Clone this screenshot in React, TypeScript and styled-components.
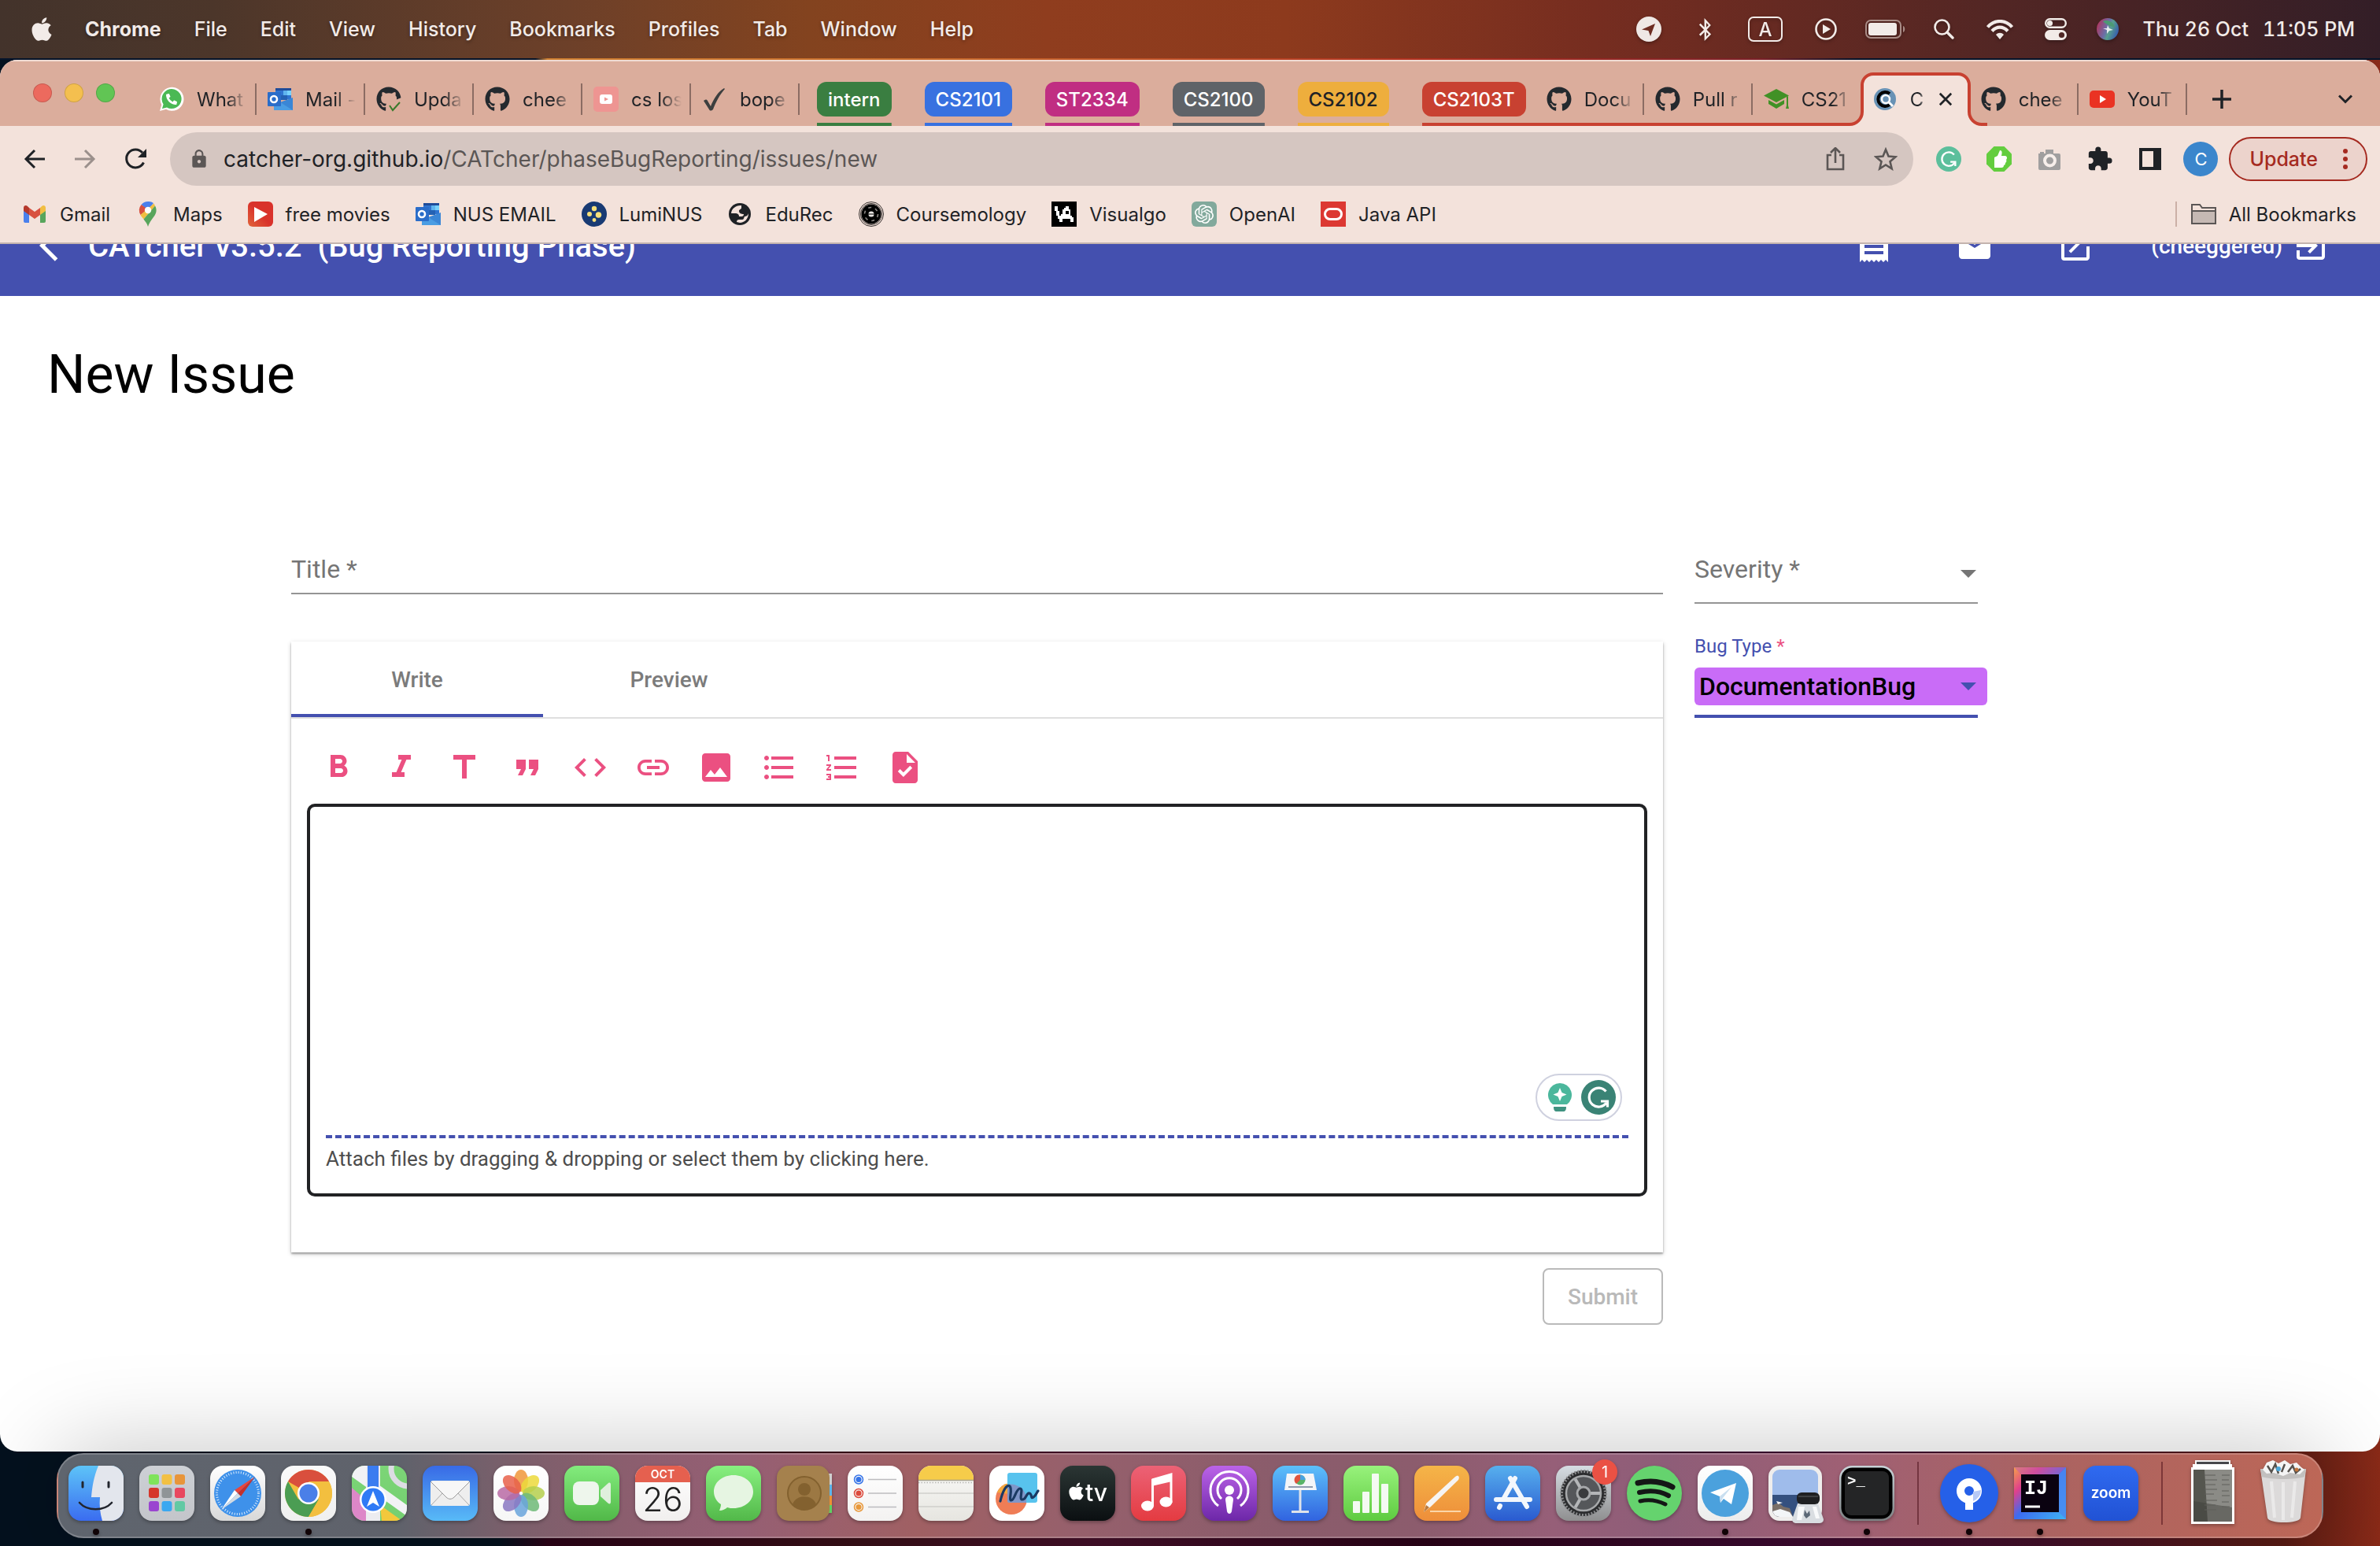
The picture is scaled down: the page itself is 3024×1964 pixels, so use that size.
import React from "react";
import styled, { createGlobalStyle, css } from "styled-components";
import { FaApple, FaGithub, FaPhoneAlt, FaThumbsUp, FaBluetoothB } from "react-icons/fa";
import {
  MdArrowBackIos,
  MdCode,
  MdExitToApp,
  MdExtension,
  MdFormatBold,
  MdFormatItalic,
  MdFormatListBulleted,
  MdFormatListNumbered,
  MdFormatQuote,
  MdImage,
  MdInsertLink,
  MdLock,
  MdMail,
  MdOpenInNew,
  MdReceipt,
  MdTask,
  MdTitle,
} from "react-icons/md";
import { SiOpenai } from "react-icons/si";

const SYSTEM = `Inter, "Liberation Sans", sans-serif`;
const ROBOTO = `Roboto, "Liberation Sans", sans-serif`;
const INDIGO = "#4450af";
const PINK = "#eb5081";
const FRAME = "#dbad9c";
const CREAM = "#f3e2db";
const INK = "#1f2226";
const GROUP_RED = "#c84131";

const GlobalStyle = createGlobalStyle`
  * { box-sizing: border-box; }
  body { margin: 0; background: #1c0716; }
  button { border: 0; padding: 0; background: none; font: inherit; color: inherit; cursor: pointer; }
  a { color: inherit; text-decoration: none; }
  svg { display: block; flex: none; }
`;

const Desktop = styled.div`
  height: 100vh;
  display: flex;
  flex-direction: column;
  overflow: hidden;
  font-family: ${SYSTEM};
  background: linear-gradient(
    90deg,
    #04111e 0%,
    #04111e 21%,
    #2d0418 23%,
    #3a1018 36%,
    #45102a 46%,
    #2b0318 60%,
    #3c0a30 74%,
    #44102a 86%,
    #5a1c14 96%,
    #8a2a18 100%
  );
`;

/* ---------- Menu bar ---------- */

const MenuBar = styled.header`
  flex: none;
  height: 76px;
  padding: 0 32px 2px 40px;
  display: flex;
  justify-content: space-between;
  align-items: center;
  color: #f2ebe8;
  font-size: 25px;
  background:
    linear-gradient(90deg, #05142a 22.5%, #d08030 23%, #c86a2c 40%, #b03020 60%, #7a2028 74%, #05142a 78%) bottom / 100% 2px no-repeat,
    linear-gradient(90deg, #43332b 0%, #4c362a 9%, #6d4029 24%, #83431f 34%, #8f3d1e 44%, #8d3a1d 54%, #762d20 67%, #522624 84%, #331e27 100%);
`;

const MenuGroup = styled.nav`
  display: flex;
  align-items: center;
  gap: 42px;
`;

const MenuItem = styled.button<{ $strong?: boolean }>`
  font-weight: ${(p) => (p.$strong ? 700 : 500)};
  text-shadow: 0 2px 4px rgba(0, 0, 0, 0.35);
`;

const AppleMark = styled(FaApple)`
  width: 26px;
  height: 34px;
`;

const StatusGroup = styled.div`
  display: flex;
  align-items: center;
`;

const StatusIcon = styled.button<{ $w: number }>`
  width: ${(p) => p.$w}px;
  display: flex;
  justify-content: center;
  filter: drop-shadow(0 2px 2px rgba(0, 0, 0, 0.3));
`;

const Clock = styled.time`
  display: flex;
  gap: 18px;
  padding-left: 15px;
  font-weight: 500;
  font-variant-numeric: tabular-nums;
  white-space: nowrap;
`;

/* ---------- Browser window ---------- */

const BrowserWindow = styled.main`
  flex: 1;
  min-height: 0;
  display: flex;
  flex-direction: column;
  overflow: hidden;
  border-radius: 22px;
  background: #fff;
`;

const TabStrip = styled.div`
  flex: none;
  height: 84px;
  display: flex;
  align-items: center;
  background: ${FRAME};
  box-shadow: inset 0 2px 0 #f0dbd3;
  color: ${INK};
  font-size: 24px;
`;

const TrafficLights = styled.div`
  display: flex;
  gap: 16px;
  padding: 0 42px;
`;

const Light = styled.button<{ $color: string }>`
  width: 24px;
  height: 24px;
  border-radius: 50%;
  background: ${(p) => p.$color};
  box-shadow: inset 0 0 0 1px rgba(0, 0, 0, 0.15);
`;

const Tabs = styled.div`
  flex: 1;
  align-self: flex-end;
  height: 68px;
  display: flex;
  align-items: center;
`;

const Tab = styled.button<{ $active?: boolean; $bare?: boolean }>`
  position: relative;
  flex: none;
  width: 138px;
  height: 68px;
  padding: 0 ${(p) => (p.$active ? 22 : 12)}px 0 14px;
  display: flex;
  align-items: center;
  gap: 16px;
  text-align: left;
  ${(p) =>
    !p.$bare &&
    css`
      background: linear-gradient(#8b6c63, #8b6c63) right center / 2px 40px no-repeat;
    `}
`;

const TabTitle = styled.span`
  flex: 1;
  min-width: 0;
  white-space: nowrap;
  mask-image: linear-gradient(90deg, #000 60%, transparent 100%);
`;

const TabShape = styled.svg`
  position: absolute;
  left: -19px;
  bottom: 0;
`;

const TabFace = styled.span`
  position: relative;
  flex: 1;
  min-width: 0;
  display: flex;
  align-items: center;
  gap: 16px;
`;

const TabGroup = styled.div<{ $color: string }>`
  flex: none;
  height: 68px;
  display: flex;
  align-items: center;
  gap: 12px;
  background: linear-gradient(${(p) => p.$color}, ${(p) => p.$color}) bottom / 100% 4px no-repeat;
`;

const GroupTabs = styled.div`
  display: flex;
`;

const Groups = styled.div`
  display: flex;
  gap: 42px;
  padding-left: 22px;
`;

const Chip = styled.button<{ $color: string; $dark?: boolean }>`
  height: 44px;
  padding: 0 14px;
  border-radius: 12px;
  background: ${(p) => p.$color};
  color: ${(p) => (p.$dark ? INK : "#fff")};
  font-weight: 500;
`;

const StripButton = styled.button`
  flex: none;
  align-self: flex-end;
  width: 88px;
  height: 68px;
  display: grid;
  place-items: center;
`;

const Toolbar = styled.div`
  flex: none;
  height: 84px;
  padding: 0 16px 0 12px;
  display: flex;
  align-items: center;
  background: ${CREAM};
  color: ${INK};
`;

const NavButton = styled.button`
  width: 64px;
  display: grid;
  place-items: center;
`;

const Omnibox = styled.div`
  flex: 1;
  height: 68px;
  margin-left: 12px;
  padding: 0 12px 0 24px;
  display: flex;
  align-items: center;
  gap: 18px;
  border-radius: 34px;
  background: #d5c6c1;
  color: #5b5655;
  font-size: 28px;
`;

const Url = styled.div`
  flex: 1;
  outline: none;
  white-space: nowrap;
`;

const Host = styled.span`
  color: ${INK};
`;

const OmniButton = styled.button`
  width: 46px;
  display: grid;
  place-items: center;
`;

const Extensions = styled.div`
  display: flex;
  padding: 0 4px 0 13px;
`;

const Avatar = styled.span`
  width: 44px;
  height: 44px;
  display: grid;
  place-items: center;
  border-radius: 50%;
  background: #3b86cc;
  color: #fff;
  font-size: 22px;
`;

const UpdateButton = styled.button`
  height: 56px;
  padding: 0 23px 0 24px;
  display: flex;
  align-items: center;
  gap: 32px;
  border: 2px solid #a52a20;
  border-radius: 28px;
  background: #ecd3cc;
  color: #a52a20;
  font-size: 25px;
  font-weight: 500;
`;

const BookmarksBar = styled.nav`
  flex: none;
  height: 66px;
  padding: 0 30px 8px 28px;
  display: flex;
  align-items: center;
  gap: 32px;
  border-bottom: 2px solid #c3b3ae;
  background: ${CREAM};
  color: ${INK};
  font-size: 24px;
`;

const Bookmark = styled.a`
  display: flex;
  align-items: center;
  gap: 16px;
  white-space: nowrap;
`;

const AllBookmarks = styled.button`
  margin-left: auto;
  height: 32px;
  padding-left: 18px;
  display: flex;
  align-items: center;
  gap: 16px;
  border-left: 2px solid #cbb0a6;
`;

/* ---------- CATcher page ---------- */

const Page = styled.div`
  flex: 1;
  min-height: 0;
  display: flex;
  flex-direction: column;
  overflow: hidden;
  font-family: ${ROBOTO};
`;

const AppBarClip = styled.div`
  flex: none;
  height: 66px;
  display: flex;
  align-items: flex-end;
  overflow: hidden;
  background: ${INDIGO};
`;

const AppBar = styled.div`
  flex: 1;
  height: 128px;
  padding: 0 64px 0 50px;
  display: flex;
  align-items: center;
  color: #fff;
  font-size: 40px;
  font-weight: 500;
`;

const AppTitle = styled.span`
  flex: 1;
  padding-left: 14px;
  white-space: pre;
`;

const AppActions = styled.div`
  display: flex;
  align-items: center;
  gap: 80px;
  padding: 2px 72px 0 0;
`;

const UserAction = styled.button`
  display: flex;
  align-items: center;
  gap: 12px;
  font-size: 28px;
`;

const Heading = styled.h1`
  margin: 60px 60px 183px;
  font-size: 68px;
  font-weight: 400;
  line-height: 80px;
  color: #000;
`;

const IssueForm = styled.form`
  padding: 0 511px 0 370px;
  display: grid;
  grid-template-columns: minmax(0, 1fr) 360px;
  gap: 40px;
  align-items: start;
`;

const Column = styled.div`
  display: flex;
  flex-direction: column;
`;

const Field = styled.div<{ $h: number }>`
  position: relative;
  height: ${(p) => p.$h}px;
  border-bottom: 2px solid #949494;
`;

const FloatingLabel = styled.label`
  position: absolute;
  top: 0;
  left: 0;
  font-size: 32px;
  line-height: 48px;
  color: #757575;
  pointer-events: none;
`;

const controlStyle = css`
  width: 100%;
  border: 0;
  padding: 0;
  outline: none;
  appearance: none;
  background: transparent;
  font: 400 32px / 48px ${ROBOTO};
`;

const TextInput = styled.input`
  ${controlStyle}
  height: 48px;
`;

const Select = styled.select`
  ${controlStyle}
  height: 48px;
`;

const Arrow = styled.svg`
  position: absolute;
  top: 25px;
  right: 2px;
  pointer-events: none;
`;

const SmallLabel = styled.label`
  margin-top: 40px;
  font-size: 24px;
  line-height: 28px;
  color: ${INDIGO};
`;

const Required = styled.span`
  color: ${PINK};
`;

const TypeField = styled.div`
  position: relative;
  margin-top: 13px;
  padding-bottom: 12px;
  border-bottom: 4px solid ${INDIGO};
`;

const TypeSelect = styled.select`
  ${controlStyle}
  display: block;
  width: calc(100% + 12px);
  height: 48px;
  padding: 0 6px;
  border-radius: 6px;
  background: #c96cf7;
  font-weight: 500;
  color: #000;
`;

const TypeArrow = styled(Arrow)`
  top: 19px;
`;

const Card = styled.section`
  margin-top: 60px;
  padding-bottom: 71px;
  background: #fff;
  box-shadow: 0 2px 2px rgba(0, 0, 0, 0.28), 0 2px 6px rgba(0, 0, 0, 0.2);
`;

const EditorTabs = styled.div`
  height: 98px;
  display: flex;
  border-bottom: 2px solid #dfdfdf;
`;

const EditorTab = styled.button<{ $active?: boolean }>`
  width: 320px;
  font-size: 28px;
  font-weight: 500;
  color: #7b7b7b;
  box-shadow: ${(p) => (p.$active ? `inset 0 -4px 0 ${INDIGO}` : "none")};
`;

const FormatBar = styled.div`
  display: flex;
  padding: 38px 20px 22px;
  color: ${PINK};
`;

const FormatButton = styled.button`
  width: 80px;
  height: 48px;
  display: grid;
  place-items: center;
`;

const Editor = styled.div`
  position: relative;
  margin: 0 20px;
  padding: 0 20px;
  border: 4px solid #212224;
  border-radius: 10px;
`;

const Body = styled.textarea`
  ${controlStyle}
  display: block;
  height: 421px;
  resize: none;
  border-bottom: 4px dashed ${INDIGO};
  border-radius: 0;
`;

const AttachLabel = styled.label`
  display: block;
  padding-bottom: 18px;
  font-size: 26px;
  line-height: 52px;
  color: #4d4d4d;
  cursor: pointer;
`;

const HiddenFile = styled.input`
  display: none;
`;

const GrammarlyPill = styled.div`
  position: absolute;
  right: 28px;
  bottom: 92px;
  width: 110px;
  height: 60px;
  padding: 0 6px 0 13px;
  display: flex;
  align-items: center;
  justify-content: space-between;
  border: 2px solid #cfd1df;
  border-radius: 30px;
  background: #fff;
`;

const Submit = styled.button`
  align-self: flex-end;
  margin-top: 20px;
  width: 153px;
  height: 72px;
  border: 2px solid #bababa;
  border-radius: 8px;
  font-size: 28px;
  font-weight: 500;
  color: #b9b9b9;
`;

/* ---------- Dock ---------- */

const Dock = styled.footer`
  flex: none;
  align-self: center;
  height: 108px;
  margin: 2px 0 10px;
  padding: 14px 13px 20px;
  display: flex;
  align-items: center;
  gap: 20px;
  border: 2px solid rgba(255, 255, 255, 0.2);
  border-radius: 34px;
  box-shadow: 0 0 120px rgba(0, 0, 0, 0.25);
  background: linear-gradient(
    90deg,
    #5f656e 0%,
    #5f626b 15%,
    #7b5f6b 20%,
    #8b5e6e 25%,
    #955f74 30%,
    #a06063 38%,
    #96606c 45%,
    #8a5c6b 54%,
    #8c5c6d 60%,
    #965f78 66%,
    #8e5d78 71%,
    #9f6074 79%,
    #ab6361 88%,
    #bd6757 100%
  );
`;

const DockItem = styled.button`
  position: relative;
  width: 70px;
  height: 70px;
  filter: drop-shadow(0 2px 2px rgba(0, 0, 0, 0.3));
`;

const RunningDot = styled.span`
  position: absolute;
  left: 31px;
  bottom: -18px;
  width: 8px;
  height: 8px;
  border-radius: 50%;
  background: #100306;
`;

const Badge = styled.span`
  position: absolute;
  top: -8px;
  right: -8px;
  width: 32px;
  height: 32px;
  display: grid;
  place-items: center;
  border-radius: 50%;
  background: #ea5144;
  color: #fff;
  font-size: 20px;
`;

const DockDivider = styled.span`
  width: 2px;
  height: 80px;
  margin: 0 9px;
  background: rgba(70, 10, 20, 0.5);
`;

/* ---------- Favicons ---------- */

const WhatsAppIcon = () => (
  <svg width="32" height="32" viewBox="0 0 32 32">
    <path d="M1 31l2.300-8A15 15 0 1 1 9 28.800z" fill="#fff" />
    <path d="M4 28l1.600-5.600A12.500 12.500 0 1 1 10 26.500z" fill="#4bb954" />
    <FaPhoneAlt x="9" y="9" size={14} color="#fff" />
  </svg>
);

const OutlookIcon = () => (
  <svg width="32" height="32" viewBox="0 0 32 32">
    <path d="M10 2h20v14H10z" fill="#2f74d0" />
    <path d="M10 2h20v3H10z" fill="#1f4c9a" />
    <path d="M20 5h10v6H20z" fill="#5fb4ef" />
    <path d="M25 5h5v6h-5z" fill="#78d2fb" />
    <path d="M16 11h9v6h-9z" fill="#2462b4" />
    <path d="M8 16l12 6 12-6v14H8z" fill="#4a9de3" />
    <path d="M32 14v16L16 20z" fill="#3a86d6" />
    <rect x="0" y="7" width="17" height="18" rx="1" fill="#2a6dc9" />
    <circle cx="8" cy="16" r="4" fill="none" stroke="#fff" strokeWidth="2.600" />
  </svg>
);

const GithubIcon = () => <FaGithub size={32} color="#24292e" />;

const GithubCheckIcon = () => (
  <svg width="32" height="32" viewBox="0 0 32 32">
    <FaGithub size={32} color="#24292e" />
    <path d="M17 32V20l15-6v18z" fill={FRAME} />
    <path d="M17 24l4 6 9-10" fill="none" stroke="#3a7a2c" strokeWidth="2" />
  </svg>
);

const PinkVideoIcon = () => (
  <svg width="32" height="32" viewBox="0 0 32 32">
    <rect width="32" height="32" rx="5" fill="#ee9592" />
    <rect x="8" y="10" width="16" height="12" rx="3" fill="#fff" />
    <path d="M14 13.500l5 2.500-5 2.500z" fill="#ee9592" />
  </svg>
);

const CheckIcon = () => (
  <svg width="32" height="32" viewBox="0 0 32 32">
    <path d="M2 18c2-2 4-2 5 0l4 7C15 15 20 7 28 2l1 1C22 11 18 19 14 29c-2 2-4 2-5 0z" fill="#3d3f3f" />
  </svg>
);

const GraduationIcon = () => (
  <svg width="32" height="32" viewBox="0 0 32 32">
    <g fill="#419126">
      <path d="M16 3l16 8.500L16 20 0 11.500z" />
      <path d="M6 17l10 5.500L26 17v5l-10 6-10-6z" />
      <path d="M29 13l2-1v12l1 4h-4l1-4z" />
    </g>
  </svg>
);

const CatcherIcon = () => (
  <svg width="32" height="32" viewBox="0 0 32 32">
    <circle cx="16" cy="16" r="14" fill="#6892b5" />
    <path d="M22 9a9 9 0 1 0 0 14" fill="none" stroke="#000" strokeWidth="4" />
    <circle cx="17" cy="16" r="5" fill="none" stroke="#fff" strokeWidth="2.500" />
    <path d="M21 20l5 5" stroke="#fff" strokeWidth="3" />
  </svg>
);

const YouTubeIcon = () => (
  <svg width="32" height="32" viewBox="0 0 32 32">
    <rect y="5" width="32" height="22" rx="5" fill="#ea3323" />
    <path d="M13 11l8 5-8 5z" fill="#fff" />
  </svg>
);

const GmailIcon = () => (
  <svg width="32" height="32" viewBox="0 0 32 32">
    <path d="M2 8v17a2 2 0 0 0 2 2h5V12z" fill="#4a80ec" />
    <path d="M30 8v17a2 2 0 0 1-2 2h-5V12z" fill="#58a55c" />
    <path d="M23 8v9l7-5V8c0-3-3-4-5-2z" fill="#f1be42" />
    <path d="M2 8v4l7 5V8L7 6C5 4 2 5 2 8z" fill="#b5382c" />
    <path d="M9 8l7 5 7-5v9l-7 5-7-5z" fill="#d85140" />
  </svg>
);

const MapsIcon = () => (
  <svg width="32" height="32" viewBox="0 0 32 32">
    <path d="M16 0A11 11 0 0 0 7.500 4l8.500 7 7-9A11 11 0 0 0 16 0z" fill="#4a80ec" />
    <path d="M7.500 4A11 11 0 0 0 6.500 17L16 10z" fill="#d85140" />
    <path d="M6.500 17c1 2 2.500 3.500 4 5.500L25 5.500l-1.500-3z" fill="#f1be42" />
    <path d="M10.500 22.500C13 26 15 28 16 32c1-4 4-8 8-13.500 3-4 3.500-9 1-13z" fill="#58a55c" />
    <circle cx="16" cy="11" r="4.200" fill="#fff" />
  </svg>
);

const FreeMoviesIcon = () => (
  <svg width="32" height="32" viewBox="0 0 32 32">
    <defs>
      <linearGradient id="movies" x1="0" y1="1" x2="1" y2="0">
        <stop offset="0" stopColor="#e0643a" />
        <stop offset="0.500" stopColor="#d9322b" />
      </linearGradient>
    </defs>
    <rect width="32" height="32" rx="6" fill="url(#movies)" />
    <path d="M8 7l17 9-17 10z" fill="#fff" />
  </svg>
);

const LuminusIcon = () => (
  <svg width="32" height="32" viewBox="0 0 32 32">
    <circle cx="16" cy="16" r="16" fill="#183a73" />
    <g fill="#f7e07a">
      <circle cx="16" cy="9" r="3.200" />
      <circle cx="10" cy="16" r="3" />
      <circle cx="21.500" cy="17" r="3.800" />
      <circle cx="16" cy="23.500" r="2.400" />
    </g>
  </svg>
);

const GlobeIcon = () => (
  <svg width="32" height="32" viewBox="0 0 32 32">
    <circle cx="16" cy="16" r="14" fill={INK} />
    <path d="M18 5C11 4.500 5.500 9 5 15h5c3 0 5 1 5 4h3c2 0 3-1 3-3-3 0-6-1-6-4 0-2 3-2 3-4z" fill={CREAM} />
    <path d="M27 15c0 7-5 12-11 12l-4-1c0-2 1-3 3-3h4c2 0 2-2 3-4 2 0 4-1 5-4z" fill={CREAM} />
  </svg>
);

const CoursemologyIcon = () => (
  <svg width="32" height="32" viewBox="0 0 32 32">
    <circle cx="16" cy="16" r="15.500" fill="none" stroke="#3a3432" strokeWidth="1" />
    <circle cx="16" cy="16" r="13.500" fill="none" stroke="#3a3432" strokeWidth="1" />
    <circle cx="16" cy="16" r="12.500" fill="#000" />
    <circle cx="16" cy="16" r="8.500" fill="none" stroke="#8d8885" strokeWidth="1.600" strokeDasharray="4 5" />
    <circle cx="16" cy="16" r="3.600" fill="#e8e4e2" />
    <path d="M12 16h8" stroke="#000" strokeWidth="1" />
  </svg>
);

const VisualgoIcon = () => (
  <svg width="32" height="32" viewBox="0 0 32 32">
    <rect width="32" height="32" fill="#000" />
    <path d="M4 6h4v6h2v6h2v4H8v-4H6v-6H4z" fill="#fff" />
    <path
      d="M18 6h4v4h2v8h2v2h2v6h-4v-4H14v4h-4v-4h2v-6h2v-6h2v-2h2zM18 12h4v4h-4z"
      fill="#fff"
      fillRule="evenodd"
    />
  </svg>
);

const OpenAiIcon = () => (
  <svg width="32" height="32" viewBox="0 0 32 32">
    <rect width="32" height="32" rx="6" fill="#82a99c" />
    <SiOpenai x="4" y="4" size={24} color="#fff" />
  </svg>
);

const OracleIcon = () => (
  <svg width="32" height="32" viewBox="0 0 32 32">
    <rect width="32" height="32" fill="#dc3832" />
    <rect x="5.500" y="9.500" width="21" height="13" rx="6.500" fill="none" stroke="#fff" strokeWidth="3" />
  </svg>
);

const GrammarlyG = ({ size, bg }: { size: number; bg: string }) => (
  <svg width={size} height={size} viewBox="0 0 44 44">
    <circle cx="22" cy="22" r="22" fill={bg} />
    <path d="M31.500 14.500A12 12 0 1 0 32 29" fill="none" stroke="#fff" strokeWidth="3.200" />
    <path d="M25 27h8.500V34.500" fill="none" stroke="#fff" strokeWidth="3.200" />
  </svg>
);

/* ---------- Status icons ---------- */

const status: { name: string; w: number; icon: React.ReactNode }[] = [
  {
    name: "Location",
    w: 68,
    icon: (
      <svg width="32" height="32" viewBox="0 0 32 32">
        <circle cx="16" cy="16" r="16" fill="#efe8e5" />
        <path d="M24 9L7 16.500l8.500 1.500L18 25z" fill="#6d2c21" />
      </svg>
    ),
  },
  { name: "Bluetooth", w: 76, icon: <FaBluetoothB size={29} /> },
  {
    name: "Input source",
    w: 77,
    icon: (
      <svg width="44" height="32" viewBox="0 0 44 32">
        <rect x="1" y="1" width="42" height="30" rx="6" fill="none" stroke="currentColor" strokeWidth="2" />
        <text x="22" y="25" textAnchor="middle" fontSize="24" fontWeight="500" fontFamily="Inter, sans-serif" fill="currentColor">
          A
        </text>
      </svg>
    ),
  },
  {
    name: "Now playing",
    w: 76,
    icon: (
      <svg width="28" height="28" viewBox="0 0 28 28">
        <circle cx="14" cy="14" r="12.500" fill="none" stroke="currentColor" strokeWidth="2.600" />
        <path d="M10 8l10 6-10 6z" fill="currentColor" />
      </svg>
    ),
  },
  {
    name: "Battery",
    w: 76,
    icon: (
      <svg width="51" height="24" viewBox="0 0 51 24">
        <rect x="1" y="1" width="44" height="22" rx="6" fill="none" stroke="#a98c86" strokeWidth="2" />
        <rect x="4" y="4" width="36" height="16" rx="3" fill="currentColor" />
        <path d="M48 8c3 1 3 7 0 8z" fill="#a98c86" />
      </svg>
    ),
  },
  {
    name: "Search",
    w: 72,
    icon: (
      <svg width="26" height="26" viewBox="0 0 26 26">
        <circle cx="10.500" cy="10.500" r="9" fill="none" stroke="currentColor" strokeWidth="2.600" />
        <path d="M17 17l7 7" stroke="currentColor" strokeWidth="3.400" strokeLinecap="round" />
      </svg>
    ),
  },
  {
    name: "Wi-Fi",
    w: 70,
    icon: (
      <svg width="34" height="25" viewBox="0 0 34 25">
        <g fill="none" stroke="currentColor" strokeWidth="4.200">
          <path d="M1.500 9.500C10-.5 24-.5 32.500 9.500" />
          <path d="M7 14.500c6-6.500 14-6.500 20 0" />
        </g>
        <path d="M12 19c3-3 7-3 10 0l-5 6z" fill="currentColor" />
      </svg>
    ),
  },
  {
    name: "Control centre",
    w: 72,
    icon: (
      <svg width="28" height="28" viewBox="0 0 28 28">
        <rect x="1.200" y="1.200" width="25.600" height="10.600" rx="5.300" fill="none" stroke="currentColor" strokeWidth="2.400" />
        <circle cx="6.500" cy="6.500" r="3.600" fill="currentColor" />
        <rect y="15" width="28" height="13" rx="6.500" fill="currentColor" />
        <circle cx="21.500" cy="21.500" r="3.600" fill="#4f2725" />
      </svg>
    ),
  },
  {
    name: "Siri",
    w: 60,
    icon: (
      <svg width="28" height="28" viewBox="0 0 28 28">
        <defs>
          <linearGradient id="siri" x1="0" y1="0.300" x2="1" y2="0.700">
            <stop offset="0" stopColor="#b0355e" />
            <stop offset="0.450" stopColor="#6a6fa8" />
            <stop offset="0.600" stopColor="#58a08e" />
            <stop offset="1" stopColor="#3457b0" />
          </linearGradient>
        </defs>
        <circle cx="14" cy="14" r="14" fill="url(#siri)" />
        <path d="M8 4c6-3 14 1 15 8-5-2-10-3-15-8z" fill="#4c9a74" />
        <path d="M14 9l2 4 5 2-5 1-3 4 0-5-5-2 5 0z" fill="#fff" opacity="0.850" />
      </svg>
    ),
  },
];

/* ---------- Dock icons ---------- */

type ArtProps = { id: string; top: string; bottom: string; children?: React.ReactNode };

const Squircle = ({ id, top, bottom, children }: ArtProps) => (
  <svg width="70" height="70" viewBox="0 0 70 70" overflow="visible">
    <defs>
      <linearGradient id={`g-${id}`} x1="0" y1="0" x2="0" y2="1">
        <stop offset="0" stopColor={top} />
        <stop offset="1" stopColor={bottom} />
      </linearGradient>
      <clipPath id={`c-${id}`}>
        <rect width="70" height="70" rx="16" />
      </clipPath>
    </defs>
    <g clipPath={`url(#c-${id})`}>
      <rect width="70" height="70" fill={`url(#g-${id})`} />
      {children}
    </g>
  </svg>
);

const launchColors = ["#7fe35b", "#f2c043", "#e8953a", "#d5352b", "#8f9497", "#e8475f", "#9a45d0", "#3ba8f0", "#62c9a4"];
const petals = ["#f0963a", "#ecd93b", "#b5cf4c", "#6fba78", "#6aa4dc", "#8a78c2", "#b86aa4", "#e8604a"];

const dockItems: ({ name: string; running?: boolean; badge?: string; art: React.ReactNode } | null)[] = [
  {
    name: "Finder",
    running: true,
    art: (
      <Squircle id="finder" top="#5dc4f8" bottom="#3a6cf0">
        <path d="M38 0C32 14 30 28 29 40h11c-1 10 0 20 3 30h27V0z" fill="#e3e6ed" />
        <path d="M18 21v6M51 21v6" stroke="#22252d" strokeWidth="3" strokeLinecap="round" />
        <path d="M14 47c10 11 31 11 41 0" fill="none" stroke="#22252d" strokeWidth="2.600" strokeLinecap="round" />
      </Squircle>
    ),
  },
  {
    name: "Launchpad",
    art: (
      <Squircle id="launch" top="#cdd0d5" bottom="#c3c5ca">
        {launchColors.map((c, i) => (
          <rect key={c} x={12 + (i % 3) * 16.500} y={11 + Math.floor(i / 3) * 17} width="13" height="13" rx="3" fill={c} />
        ))}
      </Squircle>
    ),
  },
  {
    name: "Safari",
    art: (
      <Squircle id="safari" top="#ffffff" bottom="#d8d8d8">
        <circle cx="35" cy="35" r="30" fill="#3e91ea" />
        <circle cx="35" cy="35" r="26.500" fill="none" stroke="#dcecfb" strokeWidth="3" strokeDasharray="1 2.200" />
        <path d="M57 14L31 31l4 4z" fill="#e8453c" />
        <path d="M57 14L39 39l-4-4z" fill="#c4302b" />
        <path d="M14 56l17-25 4 4z" fill="#fff" />
        <path d="M14 56l25-17-4-4z" fill="#d3dbe3" />
      </Squircle>
    ),
  },
  {
    name: "Chrome",
    running: true,
    art: (
      <Squircle id="chrome" top="#fafafa" bottom="#efefef">
        <circle cx="35" cy="35" r="30" fill="#f3bf3f" />
        <path d="M35 35L9 20A30 30 0 0 1 61 20z" fill="#d94f3d" />
        <path d="M9 20a30 30 0 0 0 26 45l13-22.500H22z" fill="#4b9d53" />
        <path d="M35 20h26a30 30 0 0 1-26 45l13-22z" fill="#f3bf3f" />
        <circle cx="35" cy="35" r="14" fill="#fff" />
        <circle cx="35" cy="35" r="11.500" fill="#4a7fe8" />
      </Squircle>
    ),
  },
  {
    name: "Maps",
    art: (
      <Squircle id="maps" top="#7cd577" bottom="#74cf70">
        <path d="M0 28l30 26v16H0z" fill="#dd87c8" />
        <path d="M0 14l70 50v-14L20 14V0H0z" fill="#f2f2f5" />
        <path d="M36 50l28 20H38z" fill="#f3c83c" />
        <path d="M18 0h18v70H18z" fill="#ececf0" />
        <path d="M20 0h14v34H20z" fill="#3b7cf0" />
        <circle cx="72" cy="4" r="22" fill="none" stroke="#dcdce3" strokeWidth="7" />
        <circle cx="27" cy="43" r="17" fill="#fff" />
        <circle cx="27" cy="43" r="14.500" fill="#2f7af5" />
        <path d="M27 32l8 20-8-5-8 5z" fill="#fff" />
      </Squircle>
    ),
  },
  {
    name: "Mail",
    art: (
      <Squircle id="mail" top="#386ae6" bottom="#58baf7">
        <rect x="10" y="19" width="50" height="32" rx="3" fill="#eeeeee" />
        <path d="M11 50l16-17M59 50L43 33" stroke="#aaa" strokeWidth="1" />
        <path d="M10 20l20 20c3 3 7 3 10 0l20-20" fill="#f7f7f7" stroke="#999" strokeWidth="1" />
      </Squircle>
    ),
  },
  {
    name: "Photos",
    art: (
      <Squircle id="photos" top="#ffffff" bottom="#f6f6f6">
        {petals.map((c, i) => (
          <ellipse key={c} cx="35" cy="19" rx="9" ry="14" fill={c} opacity="0.850" transform={`rotate(${i * 45} 35 35)`} />
        ))}
      </Squircle>
    ),
  },
  {
    name: "FaceTime",
    art: (
      <Squircle id="facetime" top="#83ec7d" bottom="#51b848">
        <rect x="11" y="20" width="33" height="30" rx="8" fill="#eef6ec" />
        <path d="M46 31l10-9c2-1 3 0 3 2v22c0 2-1 3-3 2l-10-9z" fill="#e0efdd" />
      </Squircle>
    ),
  },
  {
    name: "Calendar",
    art: (
      <Squircle id="calendar" top="#ffffff" bottom="#f1efee">
        <rect width="70" height="21" fill="#e5604f" />
        <text x="35" y="16" textAnchor="middle" fontSize="14" fontWeight="600" fontFamily="Inter, sans-serif" fill="#fff">
          OCT
        </text>
        <text x="35" y="58" textAnchor="middle" fontSize="42" fontWeight="300" fontFamily="Inter, sans-serif" fill="#222">
          26
        </text>
      </Squircle>
    ),
  },
  {
    name: "Messages",
    art: (
      <Squircle id="messages" top="#88f080" bottom="#52b849">
        <path d="M35 12c-14 0-25 9-25 21 0 7 4 13 9 16 0 3-1 5-2 8 4 0 8-2 10-4 3 1 5 1 8 1 14 0 25-9 25-21S49 12 35 12z" fill="#e6f5e2" />
      </Squircle>
    ),
  },
  {
    name: "Contacts",
    art: (
      <svg width="70" height="70" viewBox="0 0 70 70" overflow="visible">
        <path d="M60 10h10v14H60z" fill="#cfcfcf" />
        <path d="M60 24h10v14H60z" fill="#5cb5ec" />
        <path d="M60 38h10v12H60z" fill="#ee8f33" />
        <path d="M60 50h10v10H60z" fill="#60cf62" />
        <rect width="67" height="70" rx="15" fill="#a5814d" />
        <circle cx="35" cy="35" r="21" fill="#9c7843" stroke="#83612f" strokeWidth="2" />
        <circle cx="35" cy="30" r="8" fill="#83612f" />
        <path d="M20 49c4-13 26-13 30 0-8 9-22 9-30 0z" fill="#83612f" />
      </svg>
    ),
  },
  {
    name: "Reminders",
    art: (
      <Squircle id="reminders" top="#ffffff" bottom="#f3f2f1">
        {["#3574e8", "#dc4a3c", "#e8983a"].map((c, i) => (
          <g key={c}>
            <circle cx="14" cy={17.500 + i * 17.500} r="5.500" fill="none" stroke={c} strokeWidth="1.500" />
            <circle cx="14" cy={17.500 + i * 17.500} r="3.600" fill={c} />
            <path d={`M26 ${17.500 + i * 17.500}h36`} stroke="#bcbcbf" strokeWidth="1.500" />
          </g>
        ))}
      </Squircle>
    ),
  },
  {
    name: "Notes",
    art: (
      <Squircle id="notes" top="#fafaf8" bottom="#e6e5e0">
        <rect width="70" height="18" fill="#f6cc4a" />
        <path d="M0 18.500h70" stroke="#a9a48e" strokeWidth="1.500" />
        <path d="M0 21.500h70" stroke="#b9b9b5" strokeWidth="1.500" strokeDasharray="1.500 2" />
        <path d="M0 35h70M0 52h70" stroke="#cfcfcb" strokeWidth="1.500" />
      </Squircle>
    ),
  },
  {
    name: "Freeform",
    art: (
      <Squircle id="freeform" top="#ffffff" bottom="#ffffff">
        <circle cx="28" cy="42" r="20" fill="#ef7d56" />
        <path d="M10 34a20 20 0 0 1 16-12v14z" fill="#f3a73e" />
        <rect x="23" y="9" width="38" height="38" rx="3" fill="#58c3ee" />
        <path d="M23 24a20 20 0 0 1 24 23H26c-2 0-3-1-3-3z" fill="#7f96c8" />
        <path
          d="M14 45c3-13 8-22 12-19 4 4-2 18 2 18s6-15 11-15-2 14 3 14 5-9 9-8 1 8 5 5 4-6 6-8"
          fill="none"
          stroke="#1b3a63"
          strokeWidth="3.200"
          strokeLinecap="round"
        />
      </Squircle>
    ),
  },
  {
    name: "Apple TV",
    art: (
      <Squircle id="tv" top="#2b3634" bottom="#0b0f11">
        <FaApple x="8" y="20" size={25} color="#fff" />
        <text x="32" y="45" fontSize="30" fontWeight="500" fontFamily="Inter, sans-serif" fill="#fff">
          tv
        </text>
      </Squircle>
    ),
  },
  {
    name: "Music",
    art: (
      <Squircle id="music" top="#ec6276" bottom="#e43b41">
        <path d="M27 18l24-7v36" fill="none" stroke="#fff" strokeWidth="3" />
        <path d="M26 17l26-6v9l-26 6z" fill="#fff" />
        <path d="M27.500 20v31" stroke="#fff" strokeWidth="3" />
        <ellipse cx="21" cy="51" rx="8" ry="6.500" fill="#fff" />
        <ellipse cx="44.500" cy="46" rx="8" ry="6.500" fill="#fff" />
      </Squircle>
    ),
  },
  {
    name: "Podcasts",
    art: (
      <Squircle id="podcasts" top="#bb63e8" bottom="#6d27a8">
        <g fill="none" stroke="#fff" strokeWidth="3">
          <path d="M21 51a24 24 0 1 1 28 0" />
          <path d="M25 42a15 15 0 1 1 20 0" />
        </g>
        <circle cx="35" cy="31" r="6" fill="#fff" />
        <path d="M30 43c0-6 10-6 10 0l-2 15c-1 4-5 4-6 0z" fill="#fff" />
      </Squircle>
    ),
  },
  {
    name: "Keynote",
    art: (
      <Squircle id="keynote" top="#5cc0fa" bottom="#3163e0">
        <path d="M18 10h34l4 21H15z" fill="#f4f5f8" />
        <circle cx="35" cy="18" r="6.500" fill="#58b368" />
        <path d="M35 18v-6.500a6.500 6.500 0 0 1 6.500 6.500z" fill="#4aa3e0" />
        <path d="M35 18l-5 5a6.500 6.500 0 0 1 5-11.500z" fill="#e0533f" />
        <path d="M20 27h31" stroke="#8f9bb0" strokeWidth="2" />
        <path d="M35 31v27" stroke="#dfe3ea" strokeWidth="3" />
        <path d="M24 57h22v3H24z" fill="#dfe3ea" />
      </Squircle>
    ),
  },
  {
    name: "Numbers",
    art: (
      <Squircle id="numbers" top="#98f27c" bottom="#5ecb40">
        <g fill="#f4faf2">
          <rect x="12" y="45" width="9" height="15" rx="1" />
          <rect x="24" y="33" width="9" height="27" rx="1" />
          <rect x="36" y="10" width="9" height="50" rx="1" />
          <rect x="48" y="23" width="9" height="37" rx="1" />
        </g>
      </Squircle>
    ),
  },
  {
    name: "Pages",
    art: (
      <Squircle id="pages" top="#f5b548" bottom="#ee8e3a">
        <path d="M52 14c4-3 6 0 4 4L21 52l-9 7 3-11z" fill="#f6f4f2" />
        <path d="M15 50l4 3-7 6z" fill="#b9793c" />
        <path d="M20 58h39" stroke="#fbd6a8" strokeWidth="2" />
      </Squircle>
    ),
  },
  {
    name: "App Store",
    art: (
      <Squircle id="appstore" top="#57b0ee" bottom="#2a5ad0">
        <g stroke="#f3f7fc" strokeWidth="6" strokeLinecap="round">
          <path d="M38 16L24 41" />
          <path d="M32 16l21 36" />
          <path d="M14 43h43" />
          <path d="M19 51l-1 2" />
        </g>
      </Squircle>
    ),
  },
  {
    name: "System Settings",
    badge: "1",
    art: (
      <Squircle id="settings" top="#d6dde3" bottom="#8f8f90">
        <circle cx="35" cy="35" r="29" fill="#2c2d2f" />
        <circle cx="35" cy="35" r="28" fill="none" stroke="#8a8b8d" strokeWidth="4" strokeDasharray="2 2" />
        <circle cx="35" cy="35" r="22" fill="#55575a" stroke="#a6a8aa" strokeWidth="2.500" />
        <path d="M35 35h21M35 35L24.500 17M35 35L24.500 53" stroke="#b4b6b8" strokeWidth="4" />
        <circle cx="35" cy="35" r="8" fill="#3a3b3d" stroke="#a6a8aa" strokeWidth="3" />
      </Squircle>
    ),
  },
  {
    name: "Spotify",
    art: (
      <svg width="70" height="70" viewBox="0 0 70 70" overflow="visible">
        <circle cx="35" cy="35" r="35" fill="#65d36e" />
        <g fill="none" stroke="#141716" strokeLinecap="round">
          <path d="M14 22c16-4 31-2 44 5" strokeWidth="7" />
          <path d="M16 34c13-3 26-2 37 4" strokeWidth="6" />
          <path d="M17 45c12-3 22-1 32 4" strokeWidth="5" />
        </g>
      </svg>
    ),
  },
  {
    name: "Telegram",
    running: true,
    art: (
      <Squircle id="telegram" top="#ffffff" bottom="#ececec">
        <circle cx="35" cy="35" r="30" fill="#4ba1dd" />
        <path d="M16 34l33-12-6 27-10-7-4 5-1-8z" fill="#fff" />
        <path d="M28 39l15-12-11 14-3 6z" fill="#c9dff0" />
      </Squircle>
    ),
  },
  {
    name: "Preview",
    art: (
      <svg width="70" height="70" viewBox="0 0 70 70" overflow="visible">
        <rect width="68" height="70" rx="14" fill="#efedec" />
        <clipPath id="photo">
          <rect x="5" y="5" width="58" height="60" rx="9" />
        </clipPath>
        <g clipPath="url(#photo)">
          <rect x="5" y="5" width="58" height="33" fill="#9fbceb" />
          <path d="M5 37h58v28H5z" fill="#34507f" />
          <path d="M5 50l8-3 6 5 8 2 4 11H5z" fill="#7a6f68" />
          <path d="M5 58l10-3 12 4 4 6H5zM10 45l8 2-6 2z" fill="#f3f5f7" />
        </g>
        <path d="M37 48h26l7 20c0 4-3 5-6 5H36c-4 0-6-2-6-5z" fill="#d9dde1" />
        <path d="M38 52h8l-4 17h-6zM56 52h5l4 15h-5z" fill="#f8f9fa" />
        <path d="M46 56l3 5 3-4 1 6-5 4-3-4z" fill="#5c6876" />
        <rect x="36" y="34" width="29" height="15" rx="6" fill="#1f2022" />
        <path d="M38 39h25" stroke="#4a4b4e" strokeWidth="1.500" />
      </svg>
    ),
  },
  {
    name: "Terminal",
    running: true,
    art: (
      <Squircle id="terminal" top="#c9d3d8" bottom="#7d8183">
        <rect x="2.500" y="2.500" width="65" height="65" rx="14" fill="#000" />
        <rect x="7" y="7" width="56" height="56" rx="8" fill="#242526" />
        <text x="10" y="25" fontSize="19" fontWeight="700" fontFamily="Liberation Mono, monospace" fill="#fff">
          &gt;_
        </text>
      </Squircle>
    ),
  },
  null,
  {
    name: "Sourcetree",
    running: true,
    art: (
      <svg width="70" height="70" viewBox="0 0 70 70" overflow="visible">
        <circle cx="35" cy="35" r="37" fill="#2560e8" />
        <circle cx="35" cy="32" r="11" fill="none" stroke="#fff" strokeWidth="10" />
        <path d="M40 45a15 15 0 0 0 10-14l-10 2z" fill="#b7c9f6" />
        <path d="M30 44h10v12H30z" fill="#fff" />
      </svg>
    ),
  },
  {
    name: "IntelliJ IDEA",
    running: true,
    art: (
      <svg width="70" height="70" viewBox="0 0 70 70">
        <defs>
          <linearGradient id="ij" x1="0" y1="0" x2="1" y2="1">
            <stop offset="0" stopColor="#f5a04a" />
            <stop offset="0.250" stopColor="#e0408c" />
            <stop offset="0.500" stopColor="#3c6cf0" />
            <stop offset="1" stopColor="#3fb4f5" />
          </linearGradient>
        </defs>
        <rect x="2" y="2" width="66" height="66" fill="url(#ij)" />
        <path d="M2 2h66l-9 9H11z" fill="#c05ab0" opacity="0.500" />
        <path d="M68 2v66L59 59V11z" fill="#4a8af0" opacity="0.800" />
        <rect x="11" y="11" width="48" height="48" fill="#0a0210" />
        <text x="15" y="36" fontSize="25" fontWeight="700" fontFamily="Liberation Mono, monospace" fill="#fff">
          IJ
        </text>
        <path d="M16 52h19" stroke="#fff" strokeWidth="3" />
      </svg>
    ),
  },
  {
    name: "zoom.us",
    art: (
      <Squircle id="zoom" top="#2f6af0" bottom="#2152d4">
        <text x="35" y="41" textAnchor="middle" fontSize="19" fontWeight="600" fontFamily="Inter, sans-serif" fill="#fff">
          zoom
        </text>
      </Squircle>
    ),
  },
  null,
  {
    name: "Documents",
    art: (
      <svg width="70" height="70" viewBox="0 0 70 70" overflow="visible">
        <rect x="12" y="-7" width="45" height="20" fill="#f4f4f4" />
        <rect x="14" y="-5" width="41" height="4" fill="#46474b" />
        <rect x="9" y="-2" width="50" height="20" fill="#fff" />
        <rect x="7" y="2" width="55" height="72" fill="#fff" />
        <rect x="10" y="5" width="49" height="66" fill="#8b8b86" />
        <path d="M10 5h14l4 66H10z" fill="#55564f" />
        <path d="M10 45l49 8v18H10z" fill="#3d3d39" opacity="0.450" />
        <g stroke="#5f5f5a" strokeWidth="1">
          <path d="M24 12h14M24 18h16M24 24h14M24 30h16M24 36h12M24 44h16M24 50h14M24 56h15" />
          <path d="M46 12h10M46 18h9M46 24h10M46 32h9M46 38h10M46 46h9M46 52h10" />
        </g>
      </svg>
    ),
  },
  {
    name: "Trash",
    art: (
      <svg width="70" height="70" viewBox="0 0 70 70" overflow="visible">
        <path d="M5 4h58l-7 62c-1 8-41 8-42 0z" fill="#dcdada" />
        <path d="M5 4h58l-2 10c-12 4-42 4-54 0z" fill="#c2c0bf" />
        <path d="M8 5l5-9 8-3 7 4 8-4 7 5 8-2 6 6 4 3-6 6-12-2-9 4-12-4-9 1z" fill="#f4f4f4" />
        <path d="M14 0l5 8 5-10 4 12M36 -2l-4 10M40 8l6-8 4 9 6-5" fill="none" stroke="#56524e" strokeWidth="2.500" />
        <circle cx="28" cy="4" r="3" fill="#4aa7dc" />
        <circle cx="51" cy="5" r="2.500" fill="#c2743c" />
        <path d="M19 20l4 46M34 21v48M49 20l-4 46" stroke="#f1f0f0" strokeWidth="4" opacity="0.700" />
      </svg>
    ),
  },
];

/* ---------- Data ---------- */

const menus = ["File", "Edit", "View", "History", "Bookmarks", "Profiles", "Tab", "Window", "Help"];

const firstTabs = [
  { title: "What", icon: <WhatsAppIcon /> },
  { title: "Mail -", icon: <OutlookIcon /> },
  { title: "Upda", icon: <GithubCheckIcon /> },
  { title: "chee", icon: <GithubIcon /> },
  { title: "cs los", icon: <PinkVideoIcon /> },
  { title: "bope", icon: <CheckIcon /> },
];

const groups = [
  { title: "intern", color: "#3a7e41" },
  { title: "CS2101", color: "#3871e0" },
  { title: "ST2334", color: "#c02e82" },
  { title: "CS2100", color: "#5f6368" },
  { title: "CS2102", color: "#eeae3d", dark: true },
];

const bookmarks = [
  { title: "Gmail", icon: <GmailIcon /> },
  { title: "Maps", icon: <MapsIcon /> },
  { title: "free movies", icon: <FreeMoviesIcon /> },
  { title: "NUS EMAIL", icon: <OutlookIcon /> },
  { title: "LumiNUS", icon: <LuminusIcon /> },
  { title: "EduRec", icon: <GlobeIcon /> },
  { title: "Coursemology", icon: <CoursemologyIcon /> },
  { title: "Visualgo", icon: <VisualgoIcon /> },
  { title: "OpenAI", icon: <OpenAiIcon /> },
  { title: "Java API", icon: <OracleIcon /> },
];

const formats = [
  { name: "Bold", Icon: MdFormatBold },
  { name: "Italic", Icon: MdFormatItalic },
  { name: "Heading", Icon: MdTitle },
  { name: "Quote", Icon: MdFormatQuote },
  { name: "Code", Icon: MdCode },
  { name: "Link", Icon: MdInsertLink },
  { name: "Image", Icon: MdImage },
  { name: "Bulleted list", Icon: MdFormatListBulleted },
  { name: "Numbered list", Icon: MdFormatListNumbered },
  { name: "Task list", Icon: MdTask },
];

const BrowserTab = ({ title, icon, bare }: { title: string; icon: React.ReactNode; bare?: boolean }) => (
  <Tab $bare={bare}>
    {icon}
    <TabTitle>{title}</TabTitle>
  </Tab>
);

const Triangle = ({ color }: { color: string }) => <path d="M0 0h20l-10 10z" fill={color} />;

export default function App() {
  return (
    <Desktop>
      <GlobalStyle />
      <MenuBar>
        <MenuGroup>
          <MenuItem aria-label="Apple">
            <AppleMark />
          </MenuItem>
          <MenuItem $strong>Chrome</MenuItem>
          {menus.map((m) => (
            <MenuItem key={m}>{m}</MenuItem>
          ))}
        </MenuGroup>
        <StatusGroup>
          {status.map((s) => (
            <StatusIcon key={s.name} $w={s.w} aria-label={s.name}>
              {s.icon}
            </StatusIcon>
          ))}
          <Clock>
            <span>Thu 26 Oct</span>
            <span>11:05 PM</span>
          </Clock>
        </StatusGroup>
      </MenuBar>

      <BrowserWindow>
        <TabStrip>
          <TrafficLights>
            <Light $color="#ec6a5e" aria-label="Close" />
            <Light $color="#f4bf4f" aria-label="Minimise" />
            <Light $color="#61c554" aria-label="Zoom" />
          </TrafficLights>
          <Tabs>
            {firstTabs.map((t) => (
              <BrowserTab key={t.title} {...t} />
            ))}
            <Groups>
              {groups.map((g) => (
                <TabGroup key={g.title} $color={g.color}>
                  <Chip $color={g.color} $dark={g.dark}>
                    {g.title}
                  </Chip>
                </TabGroup>
              ))}
              <TabGroup $color={GROUP_RED}>
                <Chip $color={GROUP_RED}>CS2103T</Chip>
                <GroupTabs>
                  <BrowserTab title="Docu" icon={<GithubIcon />} />
                  <BrowserTab title="Pull r" icon={<GithubIcon />} />
                  <BrowserTab title="CS21" icon={<GraduationIcon />} bare />
                  <Tab $active $bare>
                    <TabShape width="182" height="68" viewBox="0 0 182 68">
                      <path d="M0 62h182v6H0z" fill={FRAME} />
                      <path
                        d="M4 68V66A16 16 0 0 0 20 50V16A14 14 0 0 1 34 2H142A14 14 0 0 1 156 16V50A16 16 0 0 0 172 66V68z"
                        fill={CREAM}
                      />
                      <path
                        d="M0 66H4A16 16 0 0 0 20 50V16A14 14 0 0 1 34 2H142A14 14 0 0 1 156 16V50A16 16 0 0 0 172 66H179"
                        fill="none"
                        stroke={GROUP_RED}
                        strokeWidth="4"
                      />
                    </TabShape>
                    <TabFace>
                      <CatcherIcon />
                      <TabTitle>C</TabTitle>
                      <svg width="18" height="18" viewBox="0 0 20 20">
                        <path d="M2 2l16 16M18 2L2 18" stroke={INK} strokeWidth="3" />
                      </svg>
                    </TabFace>
                  </Tab>
                </GroupTabs>
              </TabGroup>
            </Groups>
            <BrowserTab title="chee" icon={<GithubIcon />} />
            <BrowserTab title="YouT" icon={<YouTubeIcon />} />
            <StripButton aria-label="New tab">
              <svg width="24" height="24" viewBox="0 0 24 24">
                <path d="M12 0v24M0 12h24" stroke={INK} strokeWidth="3.500" />
              </svg>
            </StripButton>
          </Tabs>
          <StripButton aria-label="Search tabs">
            <svg width="18" height="12" viewBox="0 0 18 12">
              <path d="M1 1.500l8 8 8-8" fill="none" stroke={INK} strokeWidth="3" />
            </svg>
          </StripButton>
        </TabStrip>

        <Toolbar>
          <NavButton aria-label="Back">
            <svg width="28" height="26" viewBox="0 0 28 26">
              <path d="M27 13H3M14 2L3 13l11 11" fill="none" stroke={INK} strokeWidth="3" />
            </svg>
          </NavButton>
          <NavButton aria-label="Forward">
            <svg width="28" height="26" viewBox="0 0 28 26">
              <path d="M1 13h24M14 2l11 11-11 11" fill="none" stroke="#9b908c" strokeWidth="3" />
            </svg>
          </NavButton>
          <NavButton aria-label="Reload">
            <svg width="28" height="28" viewBox="0 0 28 28">
              <path d="M24.500 18.500A11.500 11.500 0 1 1 23 6" fill="none" stroke={INK} strokeWidth="3" />
              <path d="M28 1v11H17z" fill={INK} />
            </svg>
          </NavButton>
          <Omnibox>
            <MdLock size={26} />
            <Url role="textbox" aria-label="Address" tabIndex={0}>
              <Host>catcher-org.github.io</Host>/CATcher/phaseBugReporting/issues/new
            </Url>
            <OmniButton aria-label="Share">
              <svg width="24" height="30" viewBox="0 0 24 30">
                <path d="M7 10H2v18h20V10h-5M12 20V2M6 7l6-6 6 6" fill="none" stroke="currentColor" strokeWidth="2.600" />
              </svg>
            </OmniButton>
            <OmniButton aria-label="Bookmark this tab">
              <svg width="30" height="30" viewBox="0 0 30 30">
                <path d="M15 3l3.500 8.500 9 .8-7 6 2.200 9L15 22.500 7.300 27.300l2.200-9-7-6 9-.8z" fill="none" stroke="currentColor" strokeWidth="2.600" />
              </svg>
            </OmniButton>
          </Omnibox>
          <Extensions>
            <NavButton aria-label="Grammarly">
              <GrammarlyG size={32} bg="#5cbf9c" />
            </NavButton>
            <NavButton aria-label="Thumbs up">
              <svg width="32" height="32" viewBox="0 0 32 32">
                <path d="M9.500 0h13L32 9.500v13L22.500 32h-13L0 22.500v-13z" fill="#63cd3f" />
                <path d="M10 14l4-2 3-7c3 0 3 3 2 7h5c3 1 2 4 1 5 1 2 0 3-1 4 0 2-1 3-2 3 0 2-1 3-3 3h-9z" fill="#fff" />
              </svg>
            </NavButton>
            <NavButton aria-label="Screenshot">
              <svg width="32" height="32" viewBox="0 0 32 32">
                <path d="M2 9h2V7h5v2h2V4h10v5h7a2 2 0 0 1 2 2v17a2 2 0 0 1-2 2H4a2 2 0 0 1-2-2z" fill="#a09f9f" />
                <circle cx="16.500" cy="18" r="6.500" fill="#a09f9f" stroke="#f7efeb" strokeWidth="4" />
              </svg>
            </NavButton>
            <NavButton aria-label="Extensions">
              <MdExtension size={34} />
            </NavButton>
            <NavButton aria-label="Side panel">
              <svg width="28" height="28" viewBox="0 0 28 28">
                <path d="M0 0h28v28H0zM4 4v20h14V4z" fill={INK} fillRule="evenodd" />
              </svg>
            </NavButton>
            <NavButton aria-label="Profile">
              <Avatar>C</Avatar>
            </NavButton>
          </Extensions>
          <UpdateButton>
            Update
            <svg width="6" height="28" viewBox="0 0 6 28">
              <circle cx="3" cy="4" r="3" fill="currentColor" />
              <circle cx="3" cy="14" r="3" fill="currentColor" />
              <circle cx="3" cy="24" r="3" fill="currentColor" />
            </svg>
          </UpdateButton>
        </Toolbar>

        <BookmarksBar>
          {bookmarks.map((b) => (
            <Bookmark key={b.title} href="#">
              {b.icon}
              {b.title}
            </Bookmark>
          ))}
          <AllBookmarks>
            <svg width="32" height="26" viewBox="0 0 32 26">
              <path d="M1 25V1h10l3 4h17v20z" fill={CREAM} stroke="#5b5655" strokeWidth="2" />
              <path d="M1 9h30v16H1z" fill="#c6b9b4" stroke="#5b5655" strokeWidth="2" />
            </svg>
            All Bookmarks
          </AllBookmarks>
        </BookmarksBar>

        <Page>
          <AppBarClip>
            <AppBar>
              <button aria-label="Go back">
                <MdArrowBackIos size={48} />
              </button>
              <AppTitle>CATcher v3.5.2 {" (Bug Reporting Phase)"}</AppTitle>
              <AppActions>
                <button aria-label="Logs">
                  <MdReceipt size={48} />
                </button>
                <button aria-label="Mail">
                  <MdMail size={48} />
                </button>
                <button aria-label="Open in new window">
                  <MdOpenInNew size={48} />
                </button>
              </AppActions>
              <UserAction>
                (cheeggered)
                <MdExitToApp size={48} />
              </UserAction>
            </AppBar>
          </AppBarClip>

          <Heading>New Issue</Heading>

          <IssueForm onSubmit={(e) => e.preventDefault()}>
            <Column>
              <Field $h={56}>
                <FloatingLabel htmlFor="title">Title *</FloatingLabel>
                <TextInput id="title" type="text" />
              </Field>
              <Card>
                <EditorTabs>
                  <EditorTab type="button" $active>
                    Write
                  </EditorTab>
                  <EditorTab type="button">Preview</EditorTab>
                </EditorTabs>
                <FormatBar>
                  {formats.map(({ name, Icon }) => (
                    <FormatButton key={name} type="button" aria-label={name}>
                      <Icon size={48} />
                    </FormatButton>
                  ))}
                </FormatBar>
                <Editor>
                  <Body aria-label="Description" />
                  <AttachLabel htmlFor="attachment">
                    Attach files by dragging &amp; dropping or select them by clicking here.
                  </AttachLabel>
                  <HiddenFile id="attachment" type="file" />
                  <GrammarlyPill>
                    <svg width="32" height="38" viewBox="0 0 32 38">
                      <path d="M16 1a15 15 0 0 0-9 27h18A15 15 0 0 0 16 1z" fill="#4bb79c" />
                      <path d="M16 7l2.500 6 6 2.500-6 2.500-2.500 6-2.500-6-6-2.500 6-2.500z" fill="#fff" />
                      <path d="M8 31h16c0 4-1 6-4 6h-8c-3 0-4-2-4-6z" fill="#3f9280" />
                    </svg>
                    <GrammarlyG size={44} bg="#3a8375" />
                  </GrammarlyPill>
                </Editor>
              </Card>
              <Submit type="submit" disabled>
                Submit
              </Submit>
            </Column>
            <Column>
              <Field $h={68}>
                <FloatingLabel htmlFor="severity">Severity *</FloatingLabel>
                <Select id="severity" defaultValue="">
                  <option value="" />
                </Select>
                <Arrow width="20" height="10" viewBox="0 0 20 10">
                  <Triangle color="#757575" />
                </Arrow>
              </Field>
              <SmallLabel htmlFor="bug-type">
                Bug Type <Required>*</Required>
              </SmallLabel>
              <TypeField>
                <TypeSelect id="bug-type">
                  <option>DocumentationBug</option>
                </TypeSelect>
                <TypeArrow width="20" height="10" viewBox="0 0 20 10">
                  <Triangle color={INDIGO} />
                </TypeArrow>
              </TypeField>
            </Column>
          </IssueForm>
        </Page>
      </BrowserWindow>

      <Dock>
        {dockItems.map((item, i) =>
          item ? (
            <DockItem key={item.name} aria-label={item.name}>
              {item.art}
              {item.running && <RunningDot />}
              {item.badge && <Badge>{item.badge}</Badge>}
            </DockItem>
          ) : (
            <DockDivider key={i} />
          )
        )}
      </Dock>
    </Desktop>
  );
}
